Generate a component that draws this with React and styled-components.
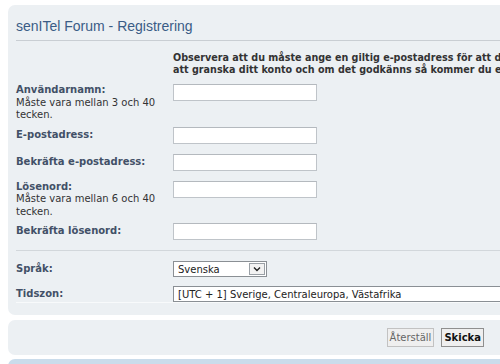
import React from "react";
import styled, { createGlobalStyle } from "styled-components";

const colors = {
  panel: "#ecf0f3",
  panelBlue: "#cadceb",
  title: "#3a5c86",
  label: "#425067",
  text: "#333"
};

const GlobalStyle = createGlobalStyle`
  body {
    margin: 0;
    background: #fff;
    font-family: "DejaVu Sans", Verdana, sans-serif;
    font-size: 10px;
    overflow: hidden;
  }
`;

const Page = styled.div`
  width: 512px;
  padding: 5px 0 0 8px;
`;

const Panel = styled.div`
  background: ${p => (p.$blue ? colors.panelBlue : colors.panel)};
  border-radius: 7px;
  margin-bottom: ${p => p.$gap || 5}px;
`;

const MainPanel = styled(Panel)`
  padding: 0 0 12px 8px;
`;

const Title = styled.h2`
  margin: 0;
  padding: 12px 0 5px;
  font-family: "Liberation Sans", Arial, sans-serif;
  font-size: 14px;
  line-height: 18px;
  font-weight: normal;
  color: ${colors.title};
  border-bottom: 1px solid #c9ced3;
`;

const Notice = styled.p`
  margin: 11px 0 0 157px;
  font-size: 9.6px;
  font-weight: bold;
  line-height: 12px;
  color: ${colors.text};
  white-space: nowrap;
`;

const Fields = styled.div`
  margin-top: 8px;
`;

const Row = styled.div`
  display: flex;
  align-items: ${p => (p.$hint ? "flex-start" : "center")};
  margin-bottom: ${p => (p.$hint ? 5 : 10)}px;
`;

const Label = styled.div`
  width: 150px;
  margin-right: 7px;
  flex-shrink: 0;
  line-height: 12.5px;
  color: ${colors.label};
`;

const LabelName = styled.div`
  font-weight: bold;
`;

const Hint = styled.div`
  color: ${colors.text};
`;

const TextInput = styled.div`
  width: 144px;
  height: 17px;
  box-sizing: border-box;
  background: #fff;
  border: 1px solid #bfc4c9;
  border-top-color: #b4b9be;
`;

const Divider = styled.div`
  border-top: 1px solid #d2d7db;
  border-bottom: 1px solid #f8fafb;
  padding-top: 10px;
`;

const SelectRow = styled.div`
  display: flex;
  align-items: center;
  margin-top: ${p => p.$top || 0}px;
`;

const Select = styled.div`
  display: flex;
  align-items: center;
  width: ${p => p.$width}px;
  height: 16px;
  box-sizing: border-box;
  flex-shrink: 0;
  padding-left: 4px;
  background: #fff;
  border: 1px solid #8a8f94;
  color: #222;
  white-space: nowrap;
`;

const SelectText = styled.span`
  flex: 1;
`;

const ArrowBox = styled.span`
  display: flex;
  align-items: center;
  justify-content: center;
  width: 16px;
  height: 12px;
  margin-right: 1px;
  box-sizing: border-box;
  border: 1px solid #9aa0a6;
  background: #f2f2f2;
`;

const ButtonBar = styled.div`
  display: flex;
  justify-content: flex-end;
  gap: 7px;
  height: 35px;
  padding: 8px 36px 0 0;
  box-sizing: border-box;
`;

const Button = styled.div`
  height: 19px;
  box-sizing: border-box;
  padding: 0 2px;
  display: flex;
  align-items: center;
  font-weight: ${p => (p.$primary ? "bold" : "normal")};
  color: ${p => (p.$primary ? "#111" : "#666")};
  background: #efefef;
  border: 1px solid ${p => (p.$primary ? "#8f8f8f" : "#c2c2c2")};
`;

const BluePanel = styled(Panel)`
  height: 30px;
`;

const Chevron = () => (
  <svg width="8" height="6" viewBox="0 0 8 6">
    <path d="M1 1.5 L4 4.5 L7 1.5" fill="none" stroke="#222" strokeWidth="1.4" />
  </svg>
);

const fields = [
  { name: "Användarnamn:", hint: "Måste vara mellan 3 och 40 tecken." },
  { name: "E-postadress:" },
  { name: "Bekräfta e-postadress:" },
  { name: "Lösenord:", hint: "Måste vara mellan 6 och 40 tecken." },
  { name: "Bekräfta lösenord:" }
];

const App = () => (
  <Page>
    <GlobalStyle />
    <MainPanel>
      <Title>senITel Forum - Registrering</Title>
      <Notice>
        Observera att du måste ange en giltig e-postadress för att din registrering ska aktiveras. Administratören kommer
        <br />
        att granska ditt konto och om det godkänns så kommer du erhålla ett e-postmeddelande till den e-postadress du angav.
      </Notice>

      <Fields>
        {fields.map(f => (
          <Row key={f.name} $hint={!!f.hint}>
            <Label>
              <LabelName>{f.name}</LabelName>
              {f.hint && <Hint>{f.hint}</Hint>}
            </Label>
            <TextInput />
          </Row>
        ))}
      </Fields>

      <Divider>
        <SelectRow>
          <Label>
            <LabelName>Språk:</LabelName>
          </Label>
          <Select $width={94}>
            <SelectText>Svenska</SelectText>
            <ArrowBox>
              <Chevron />
            </ArrowBox>
          </Select>
        </SelectRow>
        <SelectRow $top={9}>
          <Label>
            <LabelName>Tidszon:</LabelName>
          </Label>
          <Select $width={360}>
            <SelectText>[UTC + 1] Sverige, Centraleuropa, Västafrika</SelectText>
          </Select>
        </SelectRow>
      </Divider>
    </MainPanel>

    <Panel $gap={4}>
      <ButtonBar>
        <Button>Återställ</Button>
        <Button $primary>Skicka</Button>
      </ButtonBar>
    </Panel>

    <BluePanel $blue />
  </Page>
);

export default App;
